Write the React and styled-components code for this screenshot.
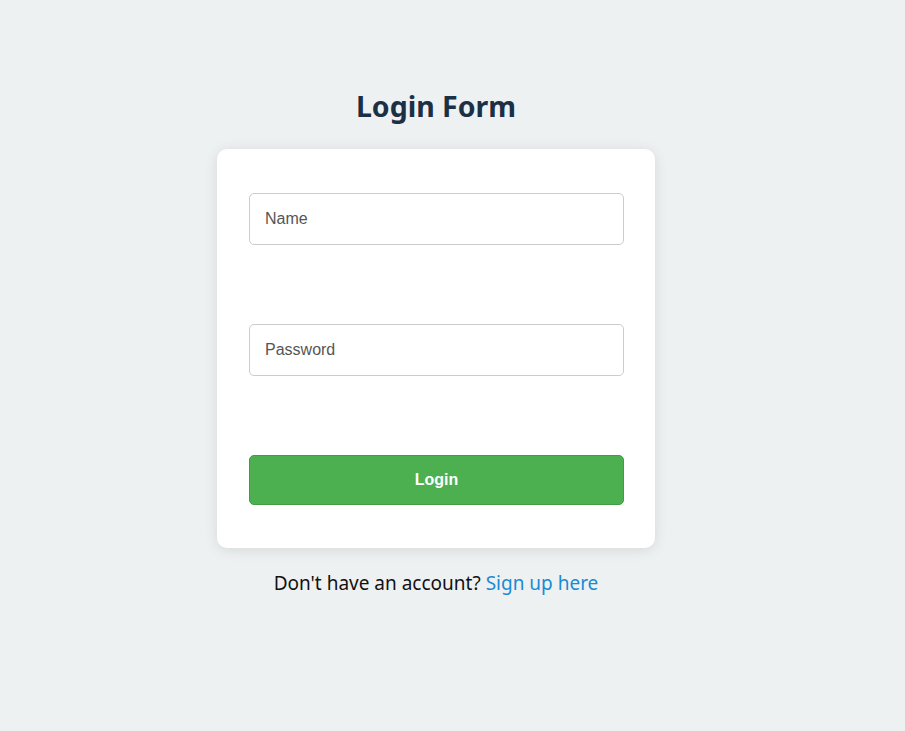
import React from "react";
import styled, { createGlobalStyle } from "styled-components";

const Global = createGlobalStyle`
	body {
		margin: 0;
		background: #eef1f2;
		font-family: "Noto Sans", "Open Sans", sans-serif;
	}
`;

const Page = styled.div`
	width: 872px;
	min-height: 731px;
	display: flex;
	flex-direction: column;
	align-items: center;
	padding-top: 86px;
	box-sizing: border-box;
`;

const Title = styled.h1`
	margin: 0 0 23px;
	font-size: 28.5px;
	line-height: 40px;
	font-weight: 700;
	color: #1c3045;
`;

const Card = styled.form`
	width: 438px;
	box-sizing: border-box;
	background: #fff;
	border-radius: 10px;
	padding: 44px 31px 43px 32px;
	box-shadow: 0 2px 14px rgba(0, 0, 0, 0.1);
	display: flex;
	flex-direction: column;
	gap: 80px;
`;

const Input = styled.input`
	height: 52px;
	box-sizing: border-box;
	width: 100%;
	border: 1px solid #cccccc;
	border-radius: 5px;
	padding: 0 15px;
	font-family: "Liberation Sans", Arial, sans-serif;
	font-size: 16px;
	color: #333;
	outline: none;
	& + & {
		margin-top: -1px;
	}
	&::placeholder {
		color: #555;
	}
`;

const Button = styled.button`
	height: 50px;
	margin-top: -1px;
	width: 100%;
	background: #4caf50;
	border: 1px solid #3f9e43;
	border-radius: 5px;
	color: #fff;
	font-family: "Liberation Sans", Arial, sans-serif;
	font-size: 16px;
	font-weight: 700;
	cursor: pointer;
`;

const Footer = styled.p`
	margin: 20px 0 0;
	font-size: 19px;
	line-height: 30px;
	color: #111;
	a {
		color: #1a8ad4;
		text-decoration: none;
	}
`;

const App = () => {
	return (
		<>
			<Global />
			<Page>
				<Title>Login Form</Title>
				<Card onSubmit={(e) => e.preventDefault()}>
					<Input type="text" placeholder="Name" />
					<Input type="password" placeholder="Password" />
					<Button type="submit">Login</Button>
				</Card>
				<Footer>
					Don't have an account? <a href="#">Sign up here</a>
				</Footer>
			</Page>
		</>
	);
};

export default App;
